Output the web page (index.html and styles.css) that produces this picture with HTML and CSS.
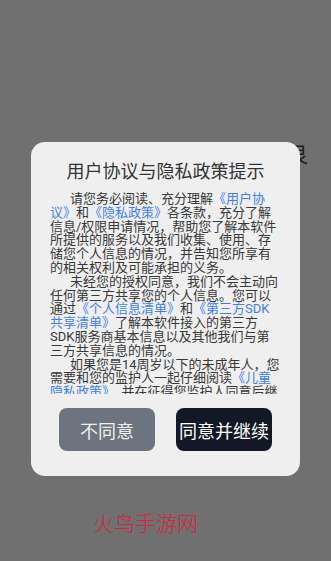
FILE: index.html
```html
<!DOCTYPE html>
<html lang="zh-CN">
<head>
<meta charset="utf-8">
<title>用户协议与隐私政策提示</title>
<link rel="stylesheet" href="styles.css">
</head>
<body>
<div class="screen">
  <span class="behind">艮</span>
  <div class="dialog">
    <h1 class="title">用户协议与隐私政策提示</h1>
    <div class="content">
      <p class="para">请您务必阅读、充分理解<a class="link">《用户协议》</a>和<a class="link">《隐私政策》</a>各条款，充分了解信息/权限申请情况，帮助您了解本软件所提供的服务以及我们收集、使用、存储您个人信息的情况，并告知您所享有的相关权利及可能承担的义务。</p>
      <p class="para">未经您的授权同意，我们不会主动向任何第三方共享您的个人信息。您可以通过<a class="link">《个人信息清单》</a>和<a class="link">《第三方SDK共享清单》</a>了解本软件接入的第三方SDK服务商基本信息以及其他我们与第三方共享信息的情况。</p>
      <p class="para">如果您是14周岁以下的未成年人，您需要和您的监护人一起仔细阅读<a class="link">《儿童隐私政策》</a>，并在征得您监护人同意后继续使用本软件。</p>
    </div>
    <div class="actions">
      <button class="btn btn-decline">不同意</button>
      <button class="btn btn-accept">同意并继续</button>
    </div>
  </div>
  <div class="watermark">火鸟手游网</div>
</div>
</body>
</html>
```
FILE: styles.css
```css
* { box-sizing: border-box; }
html, body {
  margin: 0;
  padding: 0;
  background: #707070;
}
body {
  width: 331px;
  height: 561px;
  overflow: hidden;
  font-family: Roboto, "Noto Sans CJK SC", sans-serif;
}
.screen {
  position: relative;
  height: 561px;
  padding-top: 142px;
}
.behind {
  position: absolute;
  left: 287px;
  top: 141px;
  font-size: 21px;
  line-height: 24px;
  color: #1e1e1e;
  font-family: "Noto Sans CJK SC", sans-serif;
  z-index: 0;
}
.dialog {
  position: relative;
  z-index: 1;
  margin-left: 31px;
  width: 269px;
  height: 334px;
  background: #efefef;
  border-radius: 14px;
  padding: 16px 19px 25px 19px;
  display: flex;
  flex-direction: column;
}
.title {
  margin: 0 0 10px 0;
  font-size: 18px;
  line-height: 24px;
  font-weight: 400;
  text-align: center;
  color: #333333;
  font-family: "Noto Sans CJK SC", sans-serif;
}
.content {
  height: 202px;
  overflow: hidden;
  font-size: 13px;
  line-height: 13.8px;
  color: #383838;
}
.para {
  margin: 0;
  text-indent: 20px;
}
.link {
  color: #3d7ff2;
  text-decoration: none;
}
.actions {
  margin-top: 14px;
  display: flex;
  justify-content: center;
  gap: 21px;
}
.btn {
  width: 96px;
  height: 43px;
  border: none;
  border-radius: 8px;
  font-size: 18px;
  font-family: "Noto Sans CJK SC", sans-serif;
  padding: 0;
  color: #ffffff;
}
.btn-decline {
  background: #6d737f;
  color: #f0f0f0;
}
.btn-accept {
  background: #121826;
}
.watermark {
  margin-top: 35px;
  margin-left: 93px;
  font-size: 21px;
  line-height: 22px;
  color: #d9223f;
  font-family: "Noto Sans CJK SC", sans-serif;
  font-weight: 300;
}
```
